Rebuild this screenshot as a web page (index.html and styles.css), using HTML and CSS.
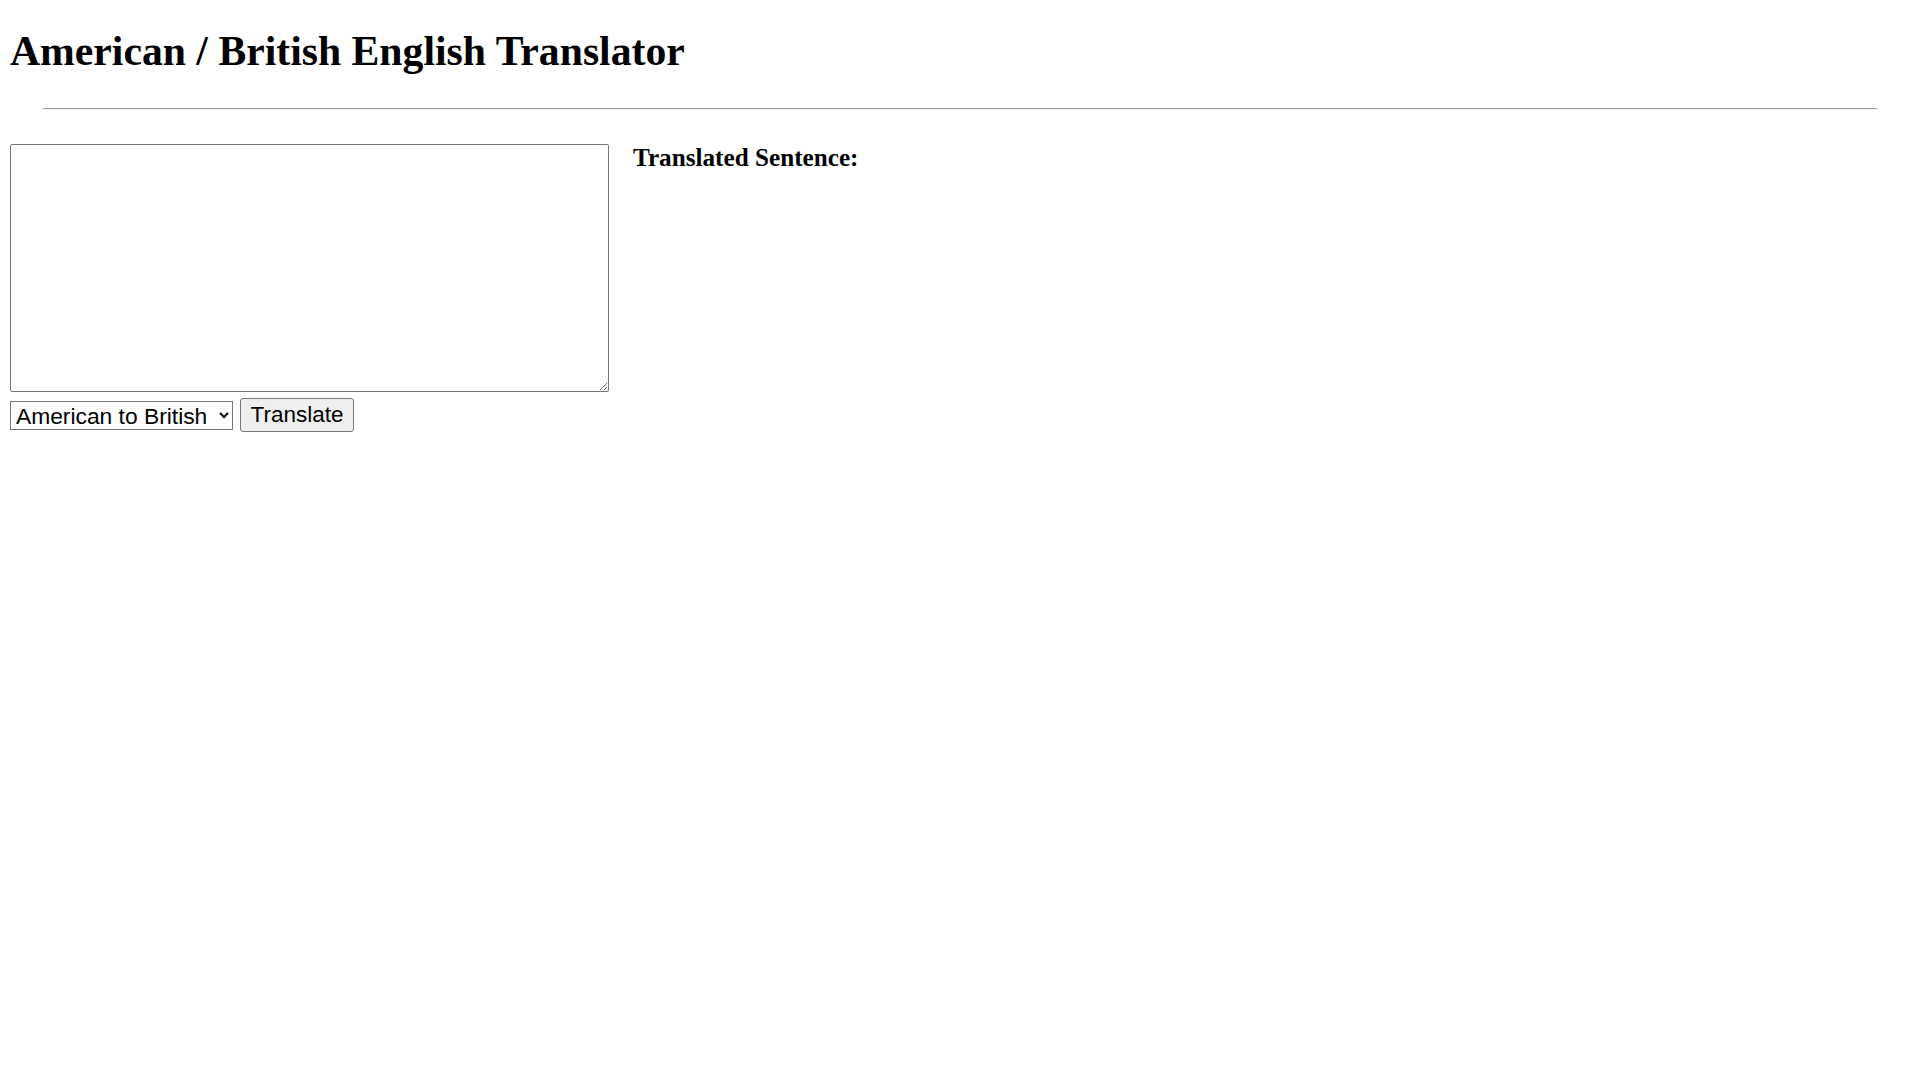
FILE: index.html
```html
<!DOCTYPE html>
<html lang="en">
<head>
<meta charset="utf-8">
<title>American / British English Translator</title>
<link rel="stylesheet" href="styles.css">
</head>
<body>
<header class="page-header">
  <h1 class="title">American / British English Translator</h1>
  <hr class="divider">
</header>
<main class="translator">
  <div class="input-col">
    <textarea class="text-input"></textarea>
    <div class="controls">
      <select class="locale-select">
        <option>American to British</option>
        <option>British to American</option>
      </select>
      <button class="translate-btn" type="button">Translate</button>
    </div>
  </div>
  <div class="output-col">
    <h3 class="output-title">Translated Sentence:</h3>
    <div class="output-text"></div>
  </div>
</main>
</body>
</html>
```

FILE: styles.css
```css
html, body {
  margin: 0;
  padding: 0;
  background: #ffffff;
}

body {
  font-family: "Liberation Serif", "Times New Roman", serif;
  color: #000;
}

.page-header {
  padding: 28px 0 0 0;
}

.title {
  margin: 0;
  padding-left: 10px;
  font-family: "Liberation Serif", "Times New Roman", serif;
  font-weight: bold;
  font-size: 41.7px;
  line-height: 46px;
}

.divider {
  margin: 34px 43px 0 43px;
  height: 0;
  border: none;
  border-top: 1px solid #9a9a9a;
  border-bottom: 1px solid #ededed;
}

.translator {
  display: flex;
  gap: 24px;
  padding: 34px 0 0 10px;
  align-items: flex-start;
}

.input-col {
  display: flex;
  flex-direction: column;
  gap: 6px;
}

.text-input {
  box-sizing: border-box;
  width: 599px;
  height: 248px;
  margin: 0;
  border: 1px solid #767676;
  border-radius: 2px;
  font-family: "Liberation Mono", monospace;
  font-size: 16px;
  resize: both;
}

.controls {
  display: flex;
  align-items: center;
  gap: 7px;
}

.locale-select {
  box-sizing: border-box;
  width: 223px;
  height: 29px;
  margin: 0;
  padding: 0 2px 0 1px;
  border: 1px solid #767676;
  border-radius: 0;
  background: #fff;
  color: #000;
  font-family: "Liberation Sans", Arial, sans-serif;
  font-size: 22.8px;
}

.translate-btn {
  box-sizing: border-box;
  height: 34px;
  width: 114px;
  margin: 0;
  padding: 0 8px;
  border: 1px solid #767676;
  border-radius: 3px;
  background: #efefef;
  color: #000;
  font-family: "Liberation Sans", Arial, sans-serif;
  font-size: 22.5px;
}

.output-col {
  display: flex;
  flex-direction: column;
}

.output-title {
  margin: 0;
  font-family: "Liberation Serif", "Times New Roman", serif;
  font-weight: bold;
  font-size: 25.2px;
  line-height: 28px;
}
```
